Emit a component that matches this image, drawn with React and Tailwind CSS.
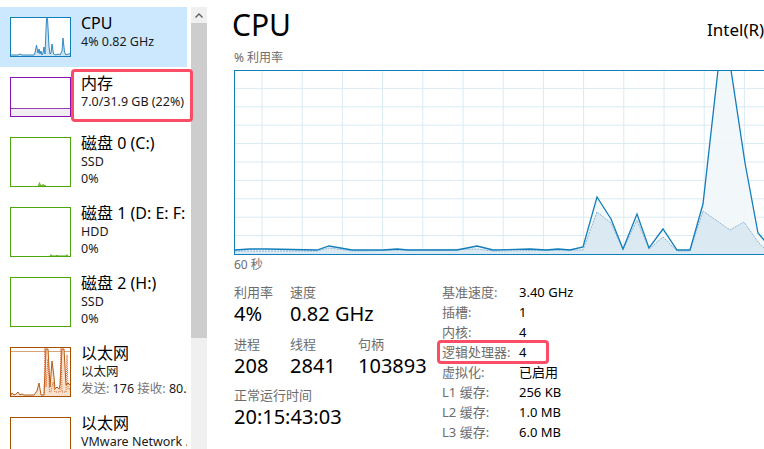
import React from "react";

const mainPts = [
  [1, 180], [16, 179], [33, 179], [83, 180], [95, 176], [118, 180], [149, 180], [163, 179],
  [174, 180], [223, 180], [243, 176], [259, 180], [296, 179], [312, 180], [324, 179], [336, 180],
  [349, 177], [363, 127], [377, 149], [389, 179], [403, 144], [415, 178], [429, 159], [443, 180],
  [456, 180], [469, 134], [484, 0], [497, 0], [511, 93], [524, 163], [530, 170], [536, 176], [546, 178],
];

const kernelPts = [
  [1, 181], [83, 181], [95, 178], [118, 181], [243, 179], [259, 181], [349, 180], [363, 142],
  [377, 153], [389, 180], [403, 150], [415, 179], [429, 167], [443, 181], [456, 181], [469, 141],
  [496, 160], [510, 152], [524, 172], [530, 178], [546, 180],
];

const toStr = (pts) => pts.map((p) => p.join(",")).join(" ");
const toArea = (pts) => `${pts[0][0]},184 ${toStr(pts)} ${pts[pts.length - 1][0]},184`;

function CpuGraph() {
  const vx = [];
  for (let x = 28; x < 546; x += 40.2) vx.push(x);
  const hy = [];
  for (let k = 1; k < 10; k++) hy.push(k * 18.4);
  return (
    <svg width="546" height="185" className="block shrink-0">
      <rect x="0" y="0" width="546" height="185" fill="#ffffff" />
      {vx.map((x) => (
        <line key={"v" + x} x1={x} y1="0" x2={x} y2="185" stroke="#d9eaf4" strokeWidth="1" />
      ))}
      {hy.map((y) => (
        <line key={"h" + y} x1="0" y1={y} x2="546" y2={y} stroke="#d9eaf4" strokeWidth="1" />
      ))}
      <polygon points={toArea(mainPts)} fill="#f1f6fa" fillOpacity="0.9" />
      <polygon points={toArea(kernelPts)} fill="#d7e6f1" fillOpacity="0.85" />
      <polyline points={toStr(kernelPts)} fill="none" stroke="#8ab6d6" strokeWidth="1" strokeDasharray="2 1" />
      <polyline points={toStr(mainPts)} fill="none" stroke="#117dbb" strokeWidth="1.3" />
      <rect x="0.5" y="0.5" width="560" height="184" fill="none" stroke="#117dbb" strokeWidth="1" />
    </svg>
  );
}

function CpuThumb() {
  const pts = [
    [1, 38], [8, 38], [10, 37], [12, 38], [24, 38], [25, 36], [26.5, 28], [28, 36], [29, 32], [30, 37],
    [31, 34], [32, 38], [33, 36], [34, 30], [35, 37], [36.5, 1.5], [37.5, 1.5], [39, 30], [40, 37],
    [41, 36], [42, 27], [43.5, 37], [46, 38], [48, 37], [50, 38], [52, 34], [53, 21], [54.5, 35],
    [56, 38], [58, 37], [60, 37],
  ];
  return (
    <svg width="61" height="40" className="block shrink-0">
      <rect x="0.5" y="0.5" width="60" height="39" fill="#ffffff" stroke="#117dbb" />
      <polygon points={`1,39 ${toStr(pts)} 60,39`} fill="#cfe3f1" />
      <polyline points={toStr(pts)} fill="none" stroke="#2f8ac4" strokeWidth="1" />
    </svg>
  );
}

function MemThumb() {
  return (
    <svg width="61" height="40" className="block shrink-0">
      <rect x="0.5" y="0.5" width="60" height="39" fill="#ffffff" stroke="#8b12ae" />
      <rect x="1" y="31" width="59" height="8" fill="#f1eef3" />
      <line x1="1" y1="31.5" x2="60" y2="31.5" stroke="#9c3cba" strokeWidth="1" />
    </svg>
  );
}

function DiskThumb({ bumps }) {
  return (
    <svg width="61" height="50" className="block shrink-0">
      <rect x="0.5" y="0.5" width="60" height="49" fill="#ffffff" stroke="#4da60c" />
      {bumps && <polygon points={bumps} fill="#8cc85a" stroke="#4da60c" strokeWidth="0.6" />}
    </svg>
  );
}

function NetThumb({ active }) {
  const solid = [
    [1, 48], [2, 46], [4, 48], [6, 47], [8, 45], [10, 48], [12, 47], [14, 48], [24, 48], [27, 44],
    [29, 36], [31, 48], [34, 48], [36, 2], [38, 2], [40, 40], [42, 14], [44, 30], [45, 42], [47, 40],
    [49, 42], [50, 38], [52, 2], [54, 2], [56, 38], [58, 36], [60, 38],
  ];
  const dotted = [
    [34, 48], [35, 1], [36, 40], [38, 12], [39.5, 45], [41, 45], [43, 35], [45, 45], [50, 45], [51, 1],
    [52, 45], [56, 45], [57, 8], [58, 42], [60, 42],
  ];
  return (
    <svg width="61" height="50" className="block shrink-0">
      <rect x="0.5" y="0.5" width="60" height="49" fill="#ffffff" stroke="#a74f01" />
      {active && (
        <>
          <line x1="1" y1="4.5" x2="60" y2="4.5" stroke="#d3a47e" strokeWidth="1" />
          <polygon points={`1,49 ${toStr(solid)} 60,49`} fill="#f6e2cf" />
          <polyline points={toStr(solid)} fill="none" stroke="#b25c12" strokeWidth="1" />
          <polyline points={toStr(dotted)} fill="none" stroke="#e0662c" strokeWidth="1" strokeDasharray="1 1" />
        </>
      )}
    </svg>
  );
}

function Item({ thumb, title, lines, selected, h }) {
  return (
    <div className={`flex shrink-0 pl-[10px] overflow-hidden ${h} ${selected ? "bg-[#cce8ff]" : ""}`}>
      <div className="mt-[10px]">{thumb}</div>
      <div className="ml-[10px] mt-[6px] min-w-0 whitespace-nowrap">
        <div className="text-[16px] leading-[20px] text-black">{title}</div>
        {lines.map((l, i) => (
          <div key={i} className="text-[12.5px] leading-[17px] text-[#1a1a1a]">
            {l}
          </div>
        ))}
      </div>
    </div>
  );
}

const Label = ({ children }) => <div className="text-[13px] leading-[18px] text-[#6d6d6d]">{children}</div>;
const Value = ({ children }) => <div className="text-[20px] leading-[26px] text-black">{children}</div>;

const specs = [
  ["基准速度:", "3.40 GHz"],
  ["插槽:", "1"],
  ["内核:", "4"],
  ["逻辑处理器:", "4"],
  ["虚拟化:", "已启用"],
  ["L1 缓存:", "256 KB"],
  ["L2 缓存:", "1.0 MB"],
  ["L3 缓存:", "6.0 MB"],
];

export default function App() {
  return (
    <div className="relative w-[764px] h-[449px] overflow-hidden bg-white flex font-['Noto_Sans','Noto_Sans_CJK_SC',sans-serif]">
      {/* left list */}
      <div className="flex w-[207px] shrink-0 pt-[7px]">
        <div className="w-[187px] flex flex-col overflow-hidden">
          <Item selected h="h-[60px]" thumb={<CpuThumb />} title="CPU" lines={["4% 0.82 GHz"]} />
          <Item h="h-[60px]" thumb={<MemThumb />} title="内存" lines={["7.0/31.9 GB (22%)"]} />
          <Item
            h="h-[70px]"
            thumb={<DiskThumb bumps="28,49 29.5,45.5 31,49 33,47.5 35,48.5 36,49" />}
            title="磁盘 0 (C:)"
            lines={["SSD", "0%"]}
          />
          <Item
            h="h-[70px]"
            thumb={<DiskThumb bumps="40,49 41,47.5 42,49 46,49 47,48 48,49 56,49 57,47.5 58,49" />}
            title="磁盘 1 (D: E: F: G:)"
            lines={["HDD", "0%"]}
          />
          <Item h="h-[70px]" thumb={<DiskThumb />} title="磁盘 2 (H:)" lines={["SSD", "0%"]} />
          <Item
            h="h-[70px]"
            thumb={<NetThumb active />}
            title="以太网"
            lines={[
              "以太网",
              <span>
                <span className="text-[#767676]">发送:</span> 176 <span className="text-[#767676]">接收:</span> 80.0 Kbps
              </span>,
            ]}
          />
          <Item h="h-[70px]" thumb={<NetThumb />} title="以太网" lines={["VMware Network ..."]} />
        </div>
        <div className="ml-[4px] w-[16px] flex flex-col bg-[#f0f0f0]">
          <div className="h-[16px] flex items-center justify-center">
            <svg width="8" height="5" viewBox="0 0 8 5">
              <polyline points="0.5,4.5 4,1 7.5,4.5" fill="none" stroke="#606060" strokeWidth="1.4" />
            </svg>
          </div>
          <div className="h-[315px] bg-[#cdcdcd]" />
        </div>
      </div>

      {/* main panel */}
      <div className="flex-1 min-w-0 overflow-hidden pl-[27px] pt-[7px] flex flex-col">
        <div className="flex items-baseline whitespace-nowrap">
          <div className="w-[475px] shrink-0 text-[30px] leading-[36px] text-black -ml-[2px]">CPU</div>
          <div className="text-[17px] leading-[22px] text-black">Intel(R) Core(TM) i5-7500 CPU @ 3.40GHz</div>
        </div>
        <div className="mt-[7px] text-[12px] leading-[16px] text-[#6d6d6d]">% 利用率</div>
        <div className="mt-[4px]">
          <CpuGraph />
        </div>
        <div className="mt-[2px] text-[12px] leading-[16px] text-[#6d6d6d]">60 秒</div>

        <div className="flex">
          <div className="w-[208px] shrink-0 pt-[10px]">
            <div className="flex">
              <div className="w-[56px]">
                <Label>利用率</Label>
                <Value>4%</Value>
              </div>
              <div>
                <Label>速度</Label>
                <Value>0.82 GHz</Value>
              </div>
            </div>
            <div className="flex mt-[8px]">
              <div className="w-[56px]">
                <Label>进程</Label>
                <Value>208</Value>
              </div>
              <div className="w-[68px]">
                <Label>线程</Label>
                <Value>2841</Value>
              </div>
              <div>
                <Label>句柄</Label>
                <Value>103893</Value>
              </div>
            </div>
            <div className="mt-[7px]">
              <Label>正常运行时间</Label>
              <Value>20:15:43:03</Value>
            </div>
          </div>
          <div className="pt-[9px]">
            {specs.map(([k, v]) => (
              <div key={k} className="flex text-[13px] leading-[20px]">
                <div className="w-[77px] text-[#6d6d6d]">{k}</div>
                <div className="text-black">{v}</div>
              </div>
            ))}
          </div>
        </div>
      </div>

      {/* annotation boxes */}
      <div className="absolute left-[71px] top-[69px] w-[122px] h-[53px] border-[3px] border-[#fa4e67] rounded-[4px]" />
      <div className="absolute left-[437px] top-[340px] w-[112px] h-[24px] border-[3px] border-[#fa4e67] rounded-[4px]" />
    </div>
  );
}
